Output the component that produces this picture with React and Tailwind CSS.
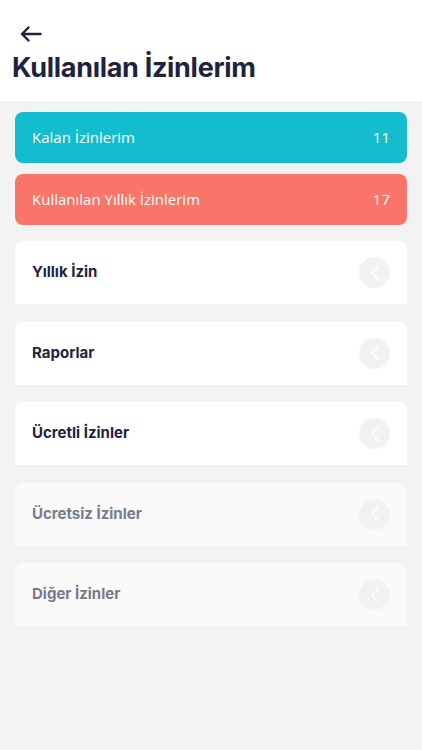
import React from 'react'

const stats = [
  { label: 'Kalan İzinlerim', value: 11, color: 'bg-[#14bdcd]' },
  { label: 'Kullanılan Yıllık İzinlerim', value: 17, color: 'bg-[#f9756a]' },
]

const items = [
  { label: 'Yıllık İzin', active: true },
  { label: 'Raporlar', active: true },
  { label: 'Ücretli İzinler', active: true },
  { label: 'Ücretsiz İzinler', active: false },
  { label: 'Diğer İzinler', active: false },
]

function Chevron() {
  return (
    <div className="flex h-[31px] w-[31px] items-center justify-center rounded-full bg-[#f2f2f2]">
      <svg width="10" height="16" viewBox="0 0 10 16" fill="none">
        <path d="M8 1.5 L2 8 L8 14.5" stroke="#ffffff" strokeWidth="1.4" strokeLinecap="round" strokeLinejoin="round" />
      </svg>
    </div>
  )
}

export default function App() {
  return (
    <div className="min-h-[750px] bg-[#f3f3f3] font-['Inter',sans-serif]">
      {/* Header */}
      <div className="bg-white h-[101px] px-3 pt-[26px]">
        <button className="ml-2 block">
          <svg width="22" height="16" viewBox="0 0 22 16" fill="none">
            <path d="M20.5 8H2 M8.5 1.5 L2 8 L8.5 14.5" stroke="#1e2340" strokeWidth="2.4" strokeLinecap="round" strokeLinejoin="round" />
          </svg>
        </button>
        <h1 className="mt-[9px] text-[27px] leading-[34px] font-bold tracking-[-0.3px] text-[#1e2340]">Kullanılan İzinlerim</h1>
      </div>

      {/* Summary */}
      <div className="px-[15px] pt-[11px] flex flex-col gap-[11px]">
        {stats.map(s => (
          <div key={s.label} className={`${s.color} h-[51px] rounded-lg flex items-center justify-between px-[17px] text-white text-[15px] font-['Open_Sans',sans-serif]`}>
            <span>{s.label}</span>
            <span>{s.value}</span>
          </div>
        ))}
      </div>

      {/* List */}
      <div className="px-[15px] pt-[16px] flex flex-col gap-[17.5px]">
        {items.map(it => (
          <div
            key={it.label}
            className={`h-[63px] rounded-t-lg flex items-center justify-between pl-[17px] pr-[17px] ${it.active ? 'bg-white' : 'bg-[#fbfafb]'}`}
          >
            <span className={`text-[15px] font-bold ${it.active ? 'text-[#1e2340]' : 'text-[#777a8c]'}`}>{it.label}</span>
            <Chevron />
          </div>
        ))}
      </div>
    </div>
  )
}
